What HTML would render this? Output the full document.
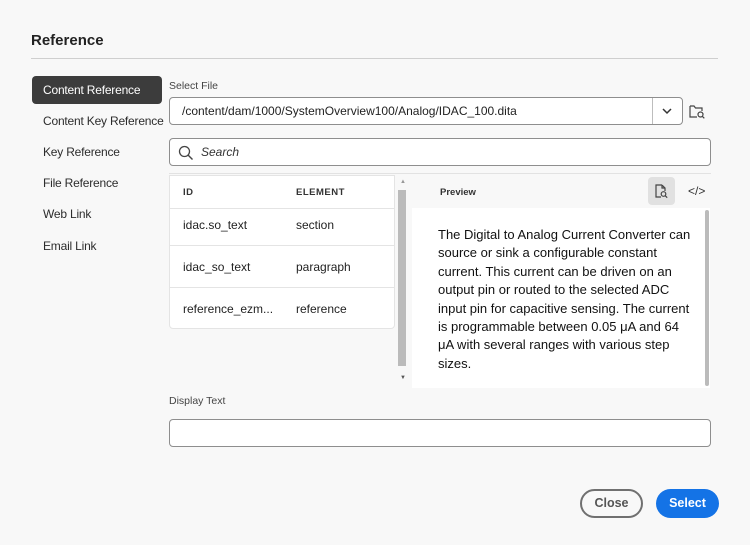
<!DOCTYPE html>
<html><head><meta charset="utf-8"><style>
*{box-sizing:border-box;margin:0;padding:0}
body{width:750px;height:545px;background:#f8f8f8;font-family:"Liberation Sans",sans-serif;color:#222;position:relative;overflow:hidden}
.a{position:absolute}
.nav{left:32px;width:130px;height:28px;font-size:12px;letter-spacing:-0.2px;padding-left:11px;line-height:28px;color:#2c2c2c;white-space:nowrap}
.lbl{font-size:10.5px;color:#444}
.box{background:#fff;border:1px solid #8e8e8e;border-radius:4px}
.row{left:169px;width:225px;border-top:1px solid #e4e4e4;font-size:12px;color:#222}
.row span{position:absolute}
</style></head><body>
<div class="a" style="left:31px;top:32px;font-size:15px;font-weight:bold;color:#222">Reference</div>
<div class="a" style="left:31px;top:58px;width:687px;height:1px;background:#cfcfcf"></div>

<div class="a nav" style="top:76px;background:#3c3c3c;color:#fff;border-radius:4px">Content Reference</div>
<div class="a nav" style="top:107px">Content Key Reference</div>
<div class="a nav" style="top:138px">Key Reference</div>
<div class="a nav" style="top:169px">File Reference</div>
<div class="a nav" style="top:200px">Web Link</div>
<div class="a nav" style="top:232px">Email Link</div>

<div class="a lbl" style="left:169px;top:80px">Select File</div>
<div class="a box" style="left:169px;top:97px;width:514px;height:28px"></div>
<div class="a" style="left:182px;top:104px;font-size:12px">/content/dam/1000/SystemOverview100/Analog/IDAC_100.dita</div>
<div class="a" style="left:652px;top:98px;width:1px;height:26px;background:#bdbdbd"></div>
<svg class="a" style="left:661px;top:105px" width="12" height="12"><path d="M2 4l4 4 4-4" fill="none" stroke="#333" stroke-width="1.5"/></svg>
<svg class="a" style="left:688px;top:102px" width="18" height="18"><path d="M2 4h4l1.5 2H14v3M2 4v11h7" fill="none" stroke="#444" stroke-width="1.2"/><circle cx="12.5" cy="12.5" r="2.5" fill="none" stroke="#444" stroke-width="1.2"/><path d="M14.3 14.3l2 2" stroke="#444" stroke-width="1.2"/></svg>

<div class="a box" style="left:169px;top:138px;width:542px;height:28px"></div>
<svg class="a" style="left:178px;top:145px" width="16" height="16"><circle cx="6.5" cy="6.5" r="5" fill="none" stroke="#444" stroke-width="1.3"/><path d="M10 10l4.5 4.5" stroke="#444" stroke-width="1.4"/></svg>
<div class="a" style="left:201px;top:145px;font-size:12px;font-style:italic;color:#333">Search</div>

<div class="a" style="left:169px;top:173px;width:542px;height:1px;background:#e2e2e2"></div>
<div class="a" style="left:169px;top:175px;width:226px;height:154px;background:#fff;border:1px solid #e4e4e4;border-radius:0 0 4px 4px"></div>
<div class="a" style="left:183px;top:187px;font-size:9.5px;font-weight:bold;letter-spacing:.5px;color:#333">ID</div>
<div class="a" style="left:296px;top:187px;font-size:9.5px;font-weight:bold;letter-spacing:.5px;color:#333">ELEMENT</div>
<div class="a row" style="top:208px;height:37px"><span style="left:14px;top:9px">idac.so_text</span><span style="left:127px;top:9px">section</span></div>
<div class="a row" style="top:245px;height:42px"><span style="left:14px;top:14px">idac_so_text</span><span style="left:127px;top:14px">paragraph</span></div>
<div class="a row" style="top:287px;height:41px"><span style="left:14px;top:14px">reference_ezm...</span><span style="left:127px;top:14px">reference</span></div>

<div class="a" style="left:398px;top:190px;width:8px;height:176px;background:#bbb"></div>
<div class="a" style="left:400px;top:179px;font-size:6px;color:#999">▲</div>
<div class="a" style="left:400px;top:375px;font-size:6px;color:#555">▼</div>

<div class="a" style="left:440px;top:187px;font-size:9.5px;font-weight:bold;color:#333">Preview</div>
<div class="a" style="left:648px;top:177px;width:27px;height:28px;background:#e1e1e1;border-radius:4px"></div>
<svg class="a" style="left:653px;top:183px" width="16" height="16"><path d="M9 2H3v12h5M9 2l3 3v3M9 2v3h3" fill="none" stroke="#444" stroke-width="1.2"/><circle cx="10.5" cy="11" r="2.3" fill="none" stroke="#444" stroke-width="1.2"/><path d="M12.2 12.7l2 2" stroke="#444" stroke-width="1.2"/></svg>
<div class="a" style="left:688px;top:184px;font-size:12px;color:#333">&lt;/&gt;</div>

<div class="a" style="left:412px;top:208px;width:298px;height:180px;background:#fff"></div>
<div class="a" style="left:705px;top:210px;width:4px;height:176px;background:#bbb;border-radius:2px"></div>
<div class="a" style="left:438px;top:226px;width:255px;font-size:13px;line-height:18.4px;color:#111">The Digital to Analog Current Converter can source or sink a configurable constant current. This current can be driven on an output pin or routed to the selected ADC input pin for capacitive sensing. The current is programmable between 0.05 μA and 64 μA with several ranges with various step sizes.</div>

<div class="a lbl" style="left:169px;top:395px">Display Text</div>
<div class="a box" style="left:169px;top:419px;width:542px;height:28px"></div>

<div class="a" style="left:580px;top:489px;width:63px;height:29px;border:2px solid #707070;border-radius:15px;font-size:12.5px;font-weight:bold;color:#555;text-align:center;line-height:25px">Close</div>
<div class="a" style="left:656px;top:489px;width:63px;height:29px;background:#1473e6;border-radius:15px;font-size:12.5px;font-weight:bold;color:#fff;text-align:center;line-height:29px">Select</div>
</body></html>
